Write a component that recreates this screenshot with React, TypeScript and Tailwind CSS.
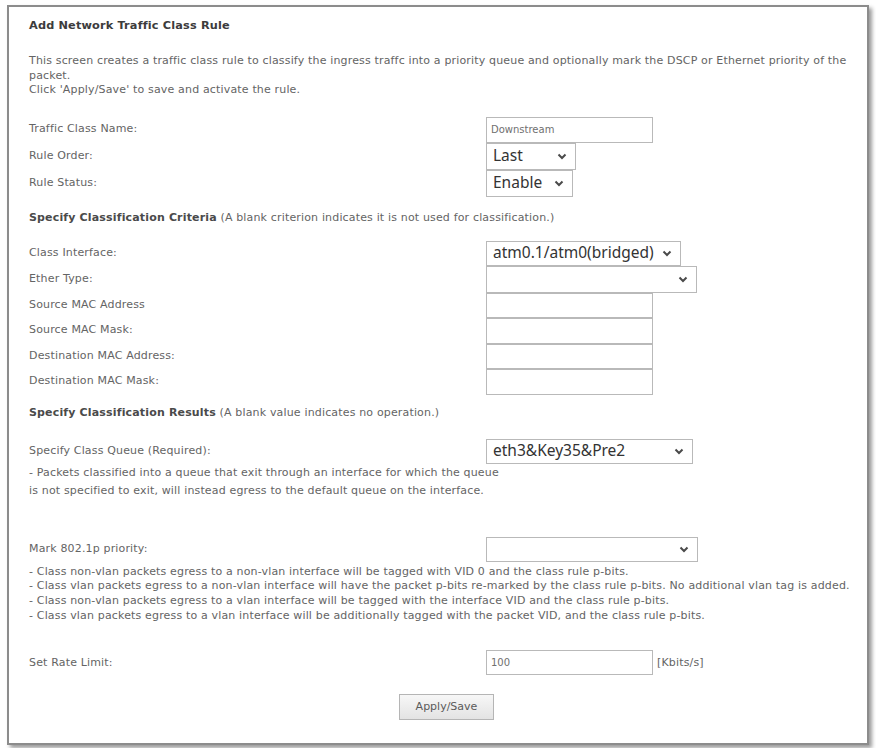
const txt = "font-['DejaVu_Sans','Liberation_Sans',sans-serif]";

function Chevron() {
  return (
    <svg width="10" height="7" viewBox="0 0 10 7" className="shrink-0">
      <polyline points="1.5,1.5 5,5 8.5,1.5" fill="none" stroke="#4a4a4a" strokeWidth="2" />
    </svg>
  );
}

function Select({ w, value }: { w: string; value?: string }) {
  return (
    <div
      className={`${w} h-full flex items-center justify-between border border-[#b9b9b9] bg-white pl-[6px] pr-[8px] text-[15.5px] tracking-normal text-[#333] font-['Noto_Sans','Open_Sans',sans-serif]`}
    >
      <span className="leading-none">{value ?? ""}</span>
      <Chevron />
    </div>
  );
}

function TextBox({ value, w = "w-[167px]" }: { value?: string; w?: string }) {
  return (
    <div className={`${w} h-full flex items-center border border-[#b9b9b9] bg-white pl-[4px] text-[10px] tracking-normal text-[#707070]`}>
      {value ?? ""}
    </div>
  );
}

function Row({ label, h, children }: { label: string; h: string; children: React.ReactNode }) {
  return (
    <div className={`flex items-center ${h}`}>
      <div className="w-[457px] shrink-0">{label}</div>
      <div className="h-full flex items-center">{children}</div>
    </div>
  );
}

export default function App() {
  return (
    <div className={`min-h-screen bg-white pt-[5px] pl-[7px] ${txt} text-[11px] tracking-[0.16px] text-[#646464]`}>
      <div className="w-[862px] h-[740px] border-2 border-[#8c8c8c] shadow-[3px_3px_4px_rgba(0,0,0,0.4)] pl-[20px] pt-[12px]">
        <div className="h-[14px] leading-[14px] font-bold text-[11.3px] text-[#3c3c3c]">Add Network Traffic Class Rule</div>

        <div className="mt-[21px] leading-[14.5px] whitespace-nowrap">
          This screen creates a traffic class rule to classify the ingress traffc into a priority queue and optionally mark the DSCP or Ethernet priority of the
          <br />
          packet.
          <br />
          Click 'Apply/Save' to save and activate the rule.
        </div>

        <div className="mt-[19px]">
          <Row label="Traffic Class Name:" h="h-[26px]">
            <TextBox value="Downstream" />
          </Row>
          <Row label="Rule Order:" h="h-[27px]">
            <Select w="w-[90px]" value="Last" />
          </Row>
          <Row label="Rule Status:" h="h-[27px]">
            <Select w="w-[87px]" value="Enable" />
          </Row>
        </div>

        <div className="mt-[14px] h-[14px] leading-[14px] whitespace-nowrap">
          <span className="font-bold text-[#4a4a4a]">Specify Classification Criteria</span> (A blank criterion indicates it is not used for classification.)
        </div>

        <div className="mt-[16px]">
          <Row label="Class Interface:" h="h-[25px]">
            <Select w="w-[195px]" value="atm0.1/atm0(bridged)" />
          </Row>
          <Row label="Ether Type:" h="h-[27px]">
            <Select w="w-[211px]" />
          </Row>
          <Row label="Source MAC Address" h="h-[25px]">
            <TextBox />
          </Row>
          <Row label="Source MAC Mask:" h="h-[26px]">
            <TextBox />
          </Row>
          <Row label="Destination MAC Address:" h="h-[25px]">
            <TextBox />
          </Row>
          <Row label="Destination MAC Mask:" h="h-[26px]">
            <TextBox />
          </Row>
        </div>

        <div className="mt-[11px] h-[14px] leading-[14px] whitespace-nowrap">
          <span className="font-bold text-[#4a4a4a]">Specify Classification Results</span> (A blank value indicates no operation.)
        </div>

        <div className="mt-[19px]">
          <Row label="Specify Class Queue (Required):" h="h-[25px]">
            <Select w="w-[207px]" value="eth3&Key35&Pre2" />
          </Row>
          <div className="leading-[18px] whitespace-nowrap">
            - Packets classified into a queue that exit through an interface for which the queue
            <br />
            is not specified to exit, will instead egress to the default queue on the interface.
          </div>
        </div>

        <div className="mt-[37px]">
          <Row label="Mark 802.1p priority:" h="h-[25px]">
            <Select w="w-[212px]" />
          </Row>
          <div className="mt-[3px] leading-[14.7px] whitespace-nowrap">
            <div>- Class non-vlan packets egress to a non-vlan interface will be tagged with VID 0 and the class rule p-bits.</div>
            <div>- Class vlan packets egress to a non-vlan interface will have the packet p-bits re-marked by the class rule p-bits. No additional vlan tag is added.</div>
            <div>- Class non-vlan packets egress to a vlan interface will be tagged with the interface VID and the class rule p-bits.</div>
            <div>- Class vlan packets egress to a vlan interface will be additionally tagged with the packet VID, and the class rule p-bits.</div>
          </div>
        </div>

        <div className="mt-[27px]">
          <Row label="Set Rate Limit:" h="h-[25px]">
            <TextBox value="100" />
            <span className="ml-[4px]">[Kbits/s]</span>
          </Row>
        </div>

        <div className="mt-[19px] flex pl-[370px]">
          <button className="w-[95px] h-[26px] border border-[#b5b5b5] bg-gradient-to-b from-[#f7f7f7] to-[#e3e3e3] text-[11px] tracking-normal text-[#5a5a5a]">
            Apply/Save
          </button>
        </div>
      </div>
    </div>
  );
}
